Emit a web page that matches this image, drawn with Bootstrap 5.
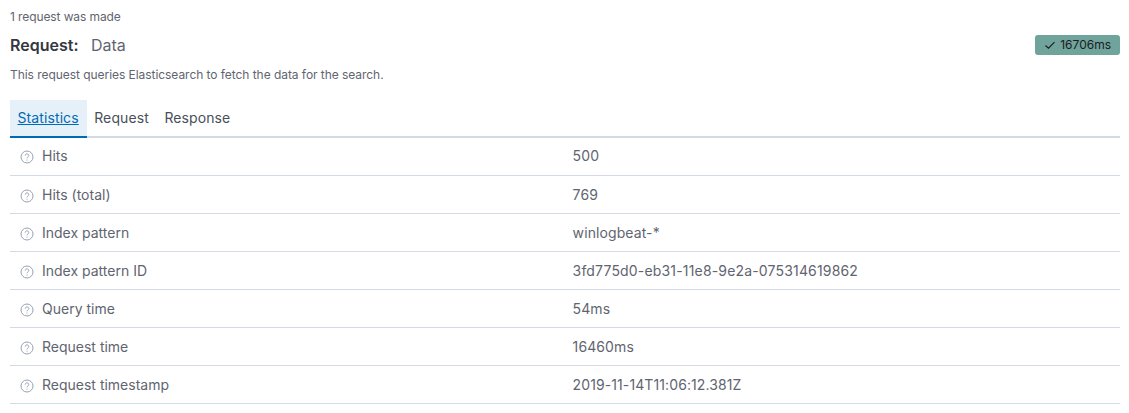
<!DOCTYPE html>
<html lang="en">
<head>
<meta charset="utf-8">
<title>Request inspector</title>
<link href="https://cdn.jsdelivr.net/npm/bootstrap@5.3.0/dist/css/bootstrap.min.css" rel="stylesheet">
<style>
html,body{background:#fff;overflow:hidden}
body{font-family:Inter,"Liberation Sans",sans-serif;color:#343741;font-size:14px}
.insp{padding:9px 9px 0 10px}
.req-count{font-size:12px;line-height:16px;color:#5f6570;height:16px;margin:0 0 8px;letter-spacing:-.1px}
.req-title{font-size:16px;line-height:24px;height:24px;color:#343741}
.req-title b{font-weight:600;margin-right:8px}
.req-title span{font-weight:400;color:#5f6570}
.req-badge{background:#6fa39b;color:#1a1c21;font-size:12px;line-height:18px;height:20px;padding:0 9px;border-radius:3px;display:inline-flex;align-items:center;gap:4.5px}
.req-desc{font-size:12px;line-height:16px;color:#5f6570;margin:10px 0 17px;letter-spacing:-.05px}
.tabbar{border-bottom:2px solid #d3dae6;height:38px;flex-wrap:nowrap}
.tabbar .nav-link{font-size:14px;line-height:20px;color:#4a4f5a;padding:8px 8px 8px 7.5px;height:38px;margin-bottom:-2px;border-radius:0;border-bottom:2px solid transparent;letter-spacing:.1px}
.tabbar .nav-link.active{background:#e6f0f8;color:#006bb4;text-decoration:underline;border-bottom-color:#006bb4}
.stat-table{margin:-1px 0 0;font-size:14px}
.stat-table td{padding:8px;height:38px;line-height:21px;color:#5f6570;border-bottom:1px solid #d3dae6;vertical-align:middle;box-sizing:border-box}
.stat-table td:first-child{width:554px;padding-left:10px}
.stat-table td:last-child{padding-left:8.6px;letter-spacing:.1px}
.stat-table td.val-id:last-child{letter-spacing:.17px}
.qicon{width:14px;height:14px;margin-right:8px;vertical-align:-3px}
</style>
</head>
<body>
<div class="insp">
  <p class="req-count">1 request was made</p>
  <div class="d-flex justify-content-between align-items-center">
    <div class="req-title"><b>Request:</b> <span>Data</span></div>
    <div class="req-badge">
      <svg width="12" height="12" viewBox="0 0 12 12" fill="none" stroke="#1a1c21" stroke-width="1.1"><path d="M1.5 6.5 4.5 9.2 10.5 3.2"/></svg>
      <span>16706ms</span>
    </div>
  </div>
  <p class="req-desc">This request queries Elasticsearch to fetch the data for the search.</p>
  <ul class="nav tabbar">
    <li class="nav-item"><a class="nav-link active" href="#">Statistics</a></li>
    <li class="nav-item"><a class="nav-link" href="#">Request</a></li>
    <li class="nav-item"><a class="nav-link" href="#">Response</a></li>
  </ul>
  <table class="table table-borderless stat-table">
    <tbody>
      <tr><td><svg class="qicon" viewBox="0 0 14 14" fill="none" stroke="#98a2b3"><circle cx="7" cy="7" r="6"/><path d="M5.2 5.6c0-1 .8-1.7 1.8-1.7s1.8.7 1.8 1.6c0 1.3-1.8 1.4-1.8 2.8"/><path d="M7 9.6v1"/></svg>Hits</td><td>500</td></tr>
      <tr><td><svg class="qicon" viewBox="0 0 14 14" fill="none" stroke="#98a2b3"><circle cx="7" cy="7" r="6"/><path d="M5.2 5.6c0-1 .8-1.7 1.8-1.7s1.8.7 1.8 1.6c0 1.3-1.8 1.4-1.8 2.8"/><path d="M7 9.6v1"/></svg>Hits (total)</td><td>769</td></tr>
      <tr><td><svg class="qicon" viewBox="0 0 14 14" fill="none" stroke="#98a2b3"><circle cx="7" cy="7" r="6"/><path d="M5.2 5.6c0-1 .8-1.7 1.8-1.7s1.8.7 1.8 1.6c0 1.3-1.8 1.4-1.8 2.8"/><path d="M7 9.6v1"/></svg>Index pattern</td><td>winlogbeat-*</td></tr>
      <tr><td><svg class="qicon" viewBox="0 0 14 14" fill="none" stroke="#98a2b3"><circle cx="7" cy="7" r="6"/><path d="M5.2 5.6c0-1 .8-1.7 1.8-1.7s1.8.7 1.8 1.6c0 1.3-1.8 1.4-1.8 2.8"/><path d="M7 9.6v1"/></svg>Index pattern ID</td><td class="val-id">3fd775d0-eb31-11e8-9e2a-075314619862</td></tr>
      <tr><td><svg class="qicon" viewBox="0 0 14 14" fill="none" stroke="#98a2b3"><circle cx="7" cy="7" r="6"/><path d="M5.2 5.6c0-1 .8-1.7 1.8-1.7s1.8.7 1.8 1.6c0 1.3-1.8 1.4-1.8 2.8"/><path d="M7 9.6v1"/></svg>Query time</td><td>54ms</td></tr>
      <tr><td><svg class="qicon" viewBox="0 0 14 14" fill="none" stroke="#98a2b3"><circle cx="7" cy="7" r="6"/><path d="M5.2 5.6c0-1 .8-1.7 1.8-1.7s1.8.7 1.8 1.6c0 1.3-1.8 1.4-1.8 2.8"/><path d="M7 9.6v1"/></svg>Request time</td><td>16460ms</td></tr>
      <tr><td><svg class="qicon" viewBox="0 0 14 14" fill="none" stroke="#98a2b3"><circle cx="7" cy="7" r="6"/><path d="M5.2 5.6c0-1 .8-1.7 1.8-1.7s1.8.7 1.8 1.6c0 1.3-1.8 1.4-1.8 2.8"/><path d="M7 9.6v1"/></svg>Request timestamp</td><td>2019-11-14T11:06:12.381Z</td></tr>
    </tbody>
  </table>
</div>
<script src="https://cdn.jsdelivr.net/npm/bootstrap@5.3.0/dist/js/bootstrap.bundle.min.js"></script>
</body>
</html>
